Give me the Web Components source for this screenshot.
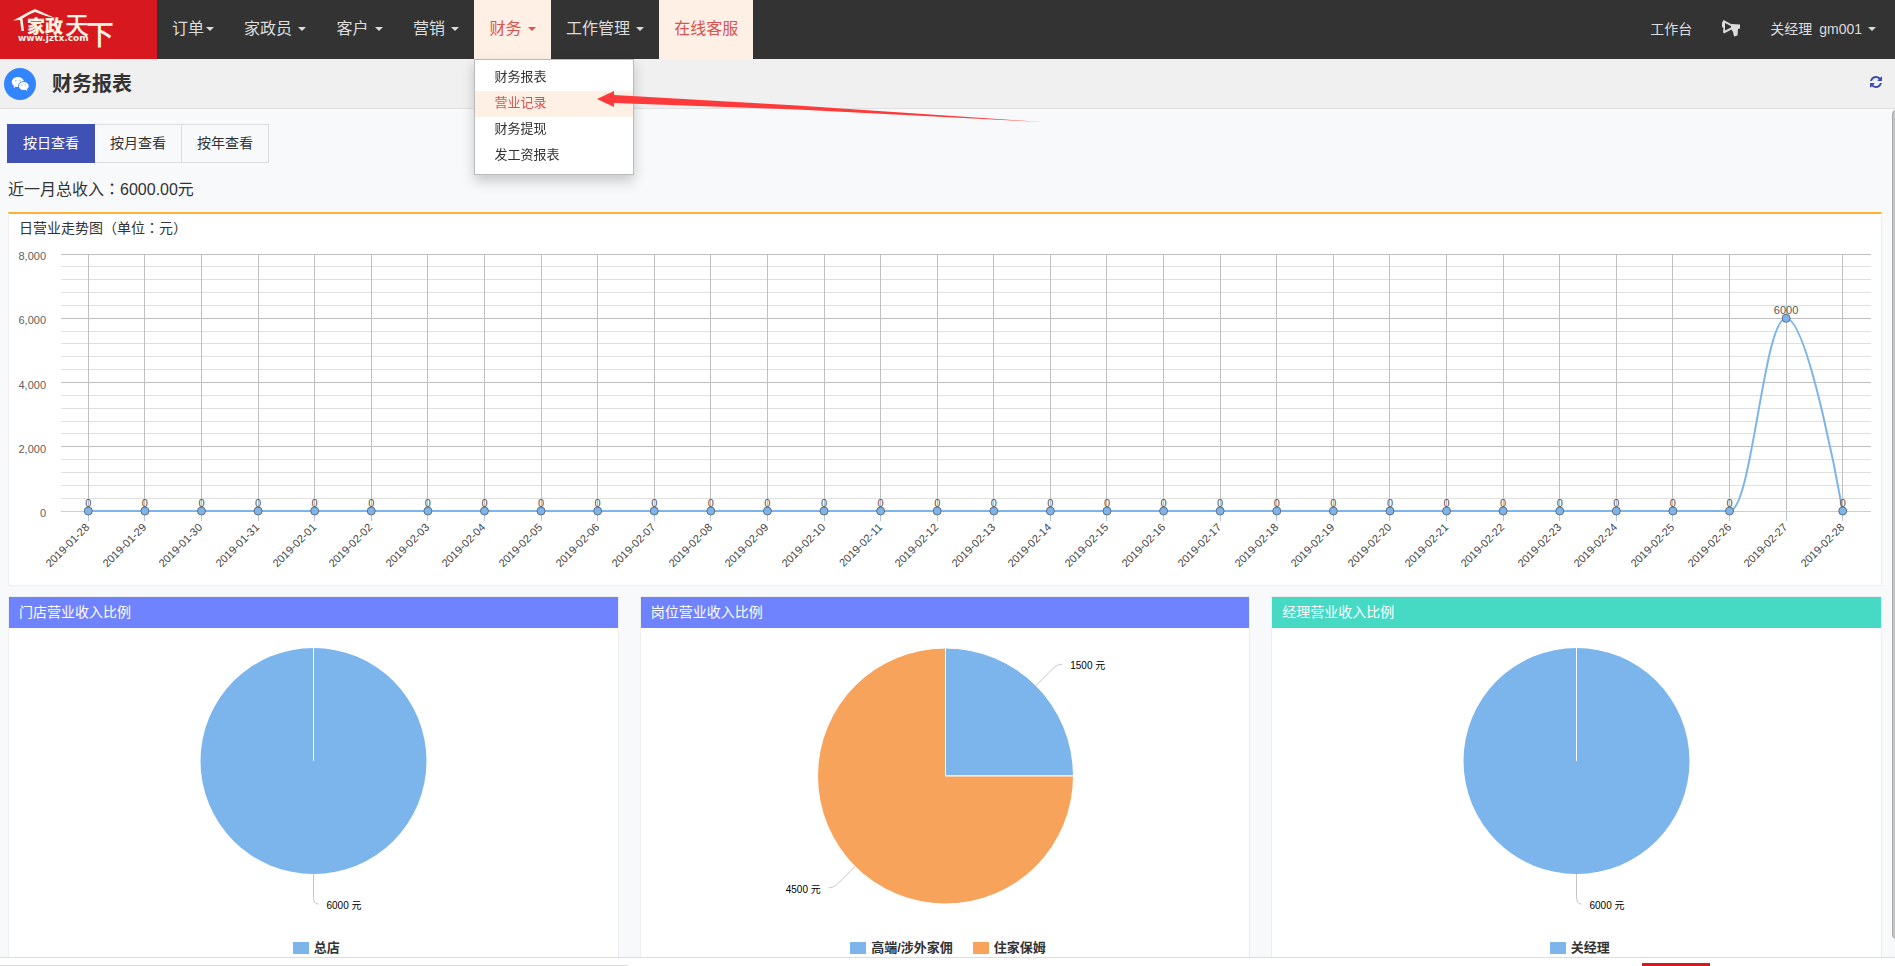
<!DOCTYPE html>
<html lang="zh-CN">
<head>
<meta charset="utf-8">
<title>财务报表</title>
<style>
  html, body { margin: 0; height: 100%; }
  body { font: 14px/20px "Liberation Sans", "Noto Sans CJK SC", sans-serif; color: #333; background: #fff; }
</style>
</head>
<body>
<finance-app></finance-app>

<script>
const define = (name, html, setup) => {
  const tpl = document.createElement('template');
  tpl.innerHTML = html;
  customElements.define(name, class extends HTMLElement {
    connectedCallback() {
      if (this.shadowRoot) return;
      this.attachShadow({ mode: 'open' }).append(tpl.content.cloneNode(true));
      if (setup) setup(this, this.shadowRoot);
    }
  });
};

/* Brand logo */
define('brand-logo', `
<style>
  :host { display: block; flex: 0 0 157px; background: #d7191f; }
  a { display: block; height: 100%; }
  svg { display: block; }
</style>
<a href="#" aria-label="家政天下">
  <svg width="157" height="59" fill="#fff3e4">
    <path d="M13 20.500 C20 17 28 12 35 9 C42 12 48 15 55 18 C48 17 41 14 35 12 C29 14 25 17 22.500 18.500 L24 31 L21.500 31 L20 20 Z"/>
    <text x="27" y="33" font-size="18" font-weight="900" font-family="Noto Sans CJK SC, sans-serif">家政</text>
    <text x="65" y="34" font-size="24" font-weight="500" font-family="Noto Sans CJK SC, sans-serif">天</text>
    <text x="86" y="45" font-size="28" font-weight="500" font-family="Noto Sans CJK SC, sans-serif">下</text>
    <text x="18" y="41" font-size="9" font-weight="bold" font-family="DejaVu Sans, sans-serif">www.jztx.com</text>
  </svg>
</a>`);

/* Navigation entry: text, optional caret, optional menu in the "menu" slot */
define('nav-item', `
<style>
  :host { display: block; position: relative; }
  a { display: flex; align-items: center; height: 59px; box-sizing: border-box; padding: 0 15px 2px;
      font-size: var(--nav-size, 16px); color: #ddd; text-decoration: none; white-space: nowrap; }
  :host([active]) a { background: #fff0e6; color: #d9534f; }
  i, .space { display: none; }
  i { margin-left: 2px; border: 4px solid transparent; border-top-color: currentColor; border-bottom: 0; }
  :host([caret]) i, :host([caret]) .space { display: block; }
  :host([tight]) .space { display: none; }
</style>
<a href="#"><slot></slot><span class="space">&nbsp;</span><i></i></a><slot name="menu"></slot>`);

define('nav-menu', `
<style>
  :host { display: block; position: absolute; z-index: 5; left: 0; top: 100%; width: 160px; box-sizing: border-box;
          padding: 5px 0; background: #fff; border: 1px solid #bbb; box-shadow: 0 6px 12px rgba(0,0,0,.2); }
  ::slotted(a) { display: block; padding: 0 19px 2px; font-size: 13px; line-height: 24px; color: #333; text-decoration: none; }
  ::slotted(a[aria-current]) { background: #fff0e6; color: #d9534f; }
</style>
<slot></slot>`);

/* Red callout arrow lying over the menu */
define('callout-arrow', `
<style>
  :host { display: block; position: absolute; z-index: 6; left: 123px; top: 91px; pointer-events: none; }
  svg { display: block; }
</style>
<svg width="446" height="32" fill="#ff3a3a"><path d="M0 8 L17 0 L17 4 L200 14.500 L445 31 L200 18.500 L17 12 L17 16 Z"/></svg>`);

define('site-header', `
<style>
  :host { display: flex; height: 59px; background: #333; }
  nav { display: flex; }
  .user { margin-left: auto; padding-right: 4px; --nav-size: 14px; }
  svg { display: block; }
  .id { margin-left: 7px; }
</style>
<brand-logo></brand-logo>
<nav>
  <nav-item caret tight>订单</nav-item>
  <nav-item caret>家政员</nav-item>
  <nav-item caret>客户</nav-item>
  <nav-item caret>营销</nav-item>
  <nav-item caret active>财务
    <nav-menu slot="menu">
      <a href="#">财务报表</a>
      <a href="#" aria-current="page">营业记录</a>
      <a href="#">财务提现</a>
      <a href="#">发工资报表</a>
    </nav-menu>
    <callout-arrow slot="menu"></callout-arrow>
  </nav-item>
  <nav-item caret>工作管理</nav-item>
  <nav-item active>在线客服</nav-item>
</nav>
<nav class="user">
  <nav-item>工作台</nav-item>
  <nav-item>
    <svg width="18" height="20" fill="#ddd" role="img" aria-label="公告">
      <path fill-rule="evenodd" d="M0 4 L1.500 1 L9 5 L18 5.500 L18 9.500 L16 10 L15.500 16.500 L12 17.500 L11 13 L9.500 10.500 L2 14.500 L1 13 L1.500 9 L0 8 Z M3 4 L3 11.500 L9 8.500 L9 7 Z"/>
    </svg>
  </nav-item>
  <nav-item caret>关经理<span class="id">gm001</span></nav-item>
</nav>`);

define('page-bar', `
<style>
  :host { display: flex; align-items: center; height: 49px; padding: 0 13px 0 4px; background: #f0f0f0; border-bottom: 1px solid #e0e0e0; }
  .badge { display: block; }
  h1 { margin: 0 auto 0 16px; font-size: 20px; line-height: 28px; font-weight: bold; }
  button { display: block; padding: 0 0 3px; border: 0; background: none; }
  button svg { display: block; }
</style>
<svg class="badge" width="32" height="32" aria-hidden="true">
  <circle cx="16" cy="16" r="16" fill="#3385ff"/>
  <path fill="#fff" d="M14 9 C10.500 9 7.800 11.200 7.800 14.100 C7.800 15.800 8.700 17.100 10.100 18.100 L9.600 20 L11.900 18.800 Q13 19.200 14.200 19.100 C13.600 15.800 16.300 13.200 19.900 13.300 C19.300 10.800 17 9 14 9 Z"/>
  <path fill="#fff" d="M19.600 13.900 C16.900 13.900 14.800 15.700 14.800 18 C14.800 20.300 16.900 22.100 19.600 22.100 Q20.600 22.100 21.500 21.800 L23.300 22.900 L22.900 21.100 C24 20.300 24.700 19.200 24.700 18 C24.700 15.700 22.400 13.900 19.600 13.900 Z"/>
  <g fill="#3385ff"><circle cx="11.900" cy="12.800" r=".6"/><circle cx="16" cy="12.800" r=".6"/><circle cx="18" cy="17" r=".5"/><circle cx="21.400" cy="17" r=".5"/></g>
</svg>
<h1>财务报表</h1>
<button aria-label="刷新">
  <svg width="12" height="12" viewBox="0 0 1536 1536" fill="#3f4bb0"><path d="M1511 928q0 5-1 7-64 268-268 434.500T764 1536q-146 0-282.500-55T238 1324l-129 129q-19 19-45 19t-45-19-19-45V960q0-26 19-45t45-19h448q26 0 45 19t19 45-19 45l-137 137q71 66 161 102t187 36q134 0 250-65t186-179q11-17 53-117 8-23 30-23h192q13 0 22.500 9.500t9.500 22.500zm25-800v448q0 26-19 45t-45 19h-448q-26 0-45-19t-19-45 19-45l138-138Q969 256 768 256q-134 0-250 65T332 500q-11 17-53 117-8 23-30 23H50q-13 0-22.500-9.500T18 608v-7q65-268 270-434.500T768 0q146 0 284 55.500T1297 212l130-129q19-19 45-19t45 19 19 45z"/></svg>
</button>`);

define('period-tabs', `
<style>
  :host { display: flex; }
  ::slotted(button) { height: 39px; margin: 0; padding: 0 15px 2px; border: 1px solid #ddd; border-left-width: 0;
    background: #f7f9fb; color: #333; font: inherit; }
  ::slotted(button[aria-pressed="true"]) { background: #3f51b5; border-color: #3f51b5; border-left-width: 1px; color: #fff; }
</style>
<slot></slot>`);

/* Spline chart of daily turnover, redrawn to the width of its host */
define('trend-chart', `
<style>
  :host { display: block; background: #fff; border: 1px solid #eee; border-top: 2px solid #ffb032; padding-bottom: 16px; }
  h2 { margin: 0; padding: 4px 10px 6px; font-size: 14px; line-height: 20px; font-weight: normal; }
  svg { display: block; width: 100%; height: 325px; overflow: visible; font-size: 11px; }
</style>
<h2><slot></slot></h2>
<svg role="img" aria-label="日营业走势图"></svg>`, (host, root) => {
  const svg = root.querySelector('svg');
  const days = [];
  for (let t = Date.UTC(2019, 0, 28); t <= Date.UTC(2019, 1, 28); t += 864e5) days.push(new Date(t).toISOString().slice(0, 10));
  const values = days.map(d => d === '2019-02-27' ? 6000 : 0);
  const draw = () => {
    const w = svg.clientWidth, left = 51, right = w - 10, top = 10, base = 267;
    const step = (right - left) / days.length;
    const X = i => left + step * (i + .5), Y = v => base - v / 8000 * (base - top);
    const snap = n => Math.floor(n) + .5;
    let s = '';
    for (let k = 1; k <= 20; k++) {
      const y = snap(Y(k * 400));
      s += `<path d="M${left + 1} ${y}H${right}" stroke="${k % 5 ? '#e0e0e0' : '#c0c0c0'}"/>`;
    }
    days.forEach((d, i) => {
      const x = snap(X(i));
      s += `<path d="M${x} ${top}V${base}" stroke="#c0c0c0"/><path d="M${x} ${base}v10" stroke="#b8c8e0"/>`;
    });
    s += `<path d="M${left + 1} ${base + .5}H${right}" stroke="#c0d0e0"/>`;
    for (let v = 0; v <= 8000; v += 2000)
      s += `<text x="${left - 14}" y="${Math.round(Y(v)) + 6}" text-anchor="end" fill="#606060">${v.toLocaleString('en-US')}</text>`;
    days.forEach((d, i) => {
      s += `<text transform="translate(${Math.round(X(i)) + 2} ${base + 17}) rotate(-45)" text-anchor="end" fill="#444">${d}</text>`;
    });
    let p = `M${X(0)} ${Y(values[0])}`;
    for (let i = 1; i < values.length; i++) {
      const c = step * .4, end = i === values.length - 1 ? 0 : c;
      p += `C${X(i - 1) + c} ${Y(values[i - 1])} ${X(i) - end} ${Y(values[i])} ${X(i)} ${Y(values[i])}`;
    }
    s += `<path d="${p}" fill="none" stroke="#7cb5ec" stroke-width="2"/>`;
    values.forEach((v, i) => {
      s += `<circle cx="${X(i)}" cy="${Y(v)}" r="4" fill="#7cb5ec" stroke="#666e78"/>`;
      s += `<text x="${X(i)}" y="${Math.round(Y(v)) - 4}" text-anchor="middle" fill="#555">${v}</text>`;
    });
    svg.innerHTML = s;
  };
  draw();
  new ResizeObserver(draw).observe(host);
});

/* Pie with outside labels and a legend; slices come as "name:value:colour" */
define('pie-card', `
<style>
  :host { display: block; background: #fff; border: 1px solid #eee; padding-bottom: 12px; }
  h2 { margin: 0; padding: 5px 10px 6px; background: var(--head, #6f83ff); color: #fff; font-size: 14px; line-height: 20px; font-weight: normal; }
  svg { display: block; width: 100%; height: 308px; overflow: visible; font-size: 10px; }
  ul { display: flex; justify-content: center; gap: 20px; margin: 0; padding: 0 0 0 6px; list-style: none; }
  li { display: flex; align-items: center; gap: 5px; font-size: 13px; line-height: 24px; font-weight: bold; }
  b { width: 16px; height: 12px; }
</style>
<h2><slot></slot></h2>
<svg role="img"></svg>
<ul></ul>`, (host, root) => {
  const svg = root.querySelector('svg'), r = +host.getAttribute('radius');
  svg.setAttribute('aria-label', host.textContent);
  const slices = host.getAttribute('slices').split(',').map(t => t.split(':'));
  const total = slices.reduce((a, t) => a + +t[1], 0);
  root.querySelector('ul').innerHTML = slices.map(t => `<li><b style="background:${t[2]}"></b>${t[0]}</li>`).join('');
  const draw = () => {
    const cx = Math.floor(svg.clientWidth / 2) + .5, cy = 20 + r;
    const at = (a, d) => [Math.sin(a) * d, -Math.cos(a) * d];
    let a = 0, s = '';
    slices.forEach(t => {
      const share = t[1] / total, b = a + share * 2 * Math.PI, m = (a + b) / 2;
      const [x1, y1] = at(a, r), [x2, y2] = at(b, r);
      s += share === 1
        ? `<circle r="${r}" fill="${t[2]}"/><path d="M0 0V${-r}" stroke="#fff"/>`
        : `<path d="M0 0L${x1} ${y1}A${r} ${r} 0 ${share > .5 ? 1 : 0} 1 ${x2} ${y2}Z" fill="${t[2]}" stroke="#fff"/>`;
      const side = Math.sin(m) < -.01 ? -1 : 1;
      const [p, q] = at(m, r), [u, v] = at(m, r + 18), [g, h] = at(m, r + 26), [e, f] = at(m, r + 30);
      s += `<path d="M${p} ${q}L${u} ${v}C${g} ${h} ${e} ${f} ${e + side * 5} ${f}" fill="none" stroke="#c4c4c4"/>`;
      s += `<text x="${e + side * 13}" y="${f + 5}" text-anchor="${side < 0 ? 'end' : 'start'}" fill="#000">${t[1]} 元</text>`;
      a = b;
    });
    svg.innerHTML = `<g transform="translate(${cx} ${cy})">${s}</g>`;
  };
  draw();
  new ResizeObserver(draw).observe(host);
});

define('report-view', `
<style>
  :host { display: block; box-sizing: border-box; padding: 15px 13px 20px 8px; background: #f7f9fb; overflow: auto; scrollbar-width: none; min-height: 0; }
  period-tabs { margin-left: -1px; }
  p { margin: 15px 0 10px; font-size: 16px; line-height: 24px; }
  span:lang(zh-TW) { font-family: "Liberation Sans", "Noto Sans CJK TC", sans-serif; }
  .pies { display: grid; grid-template-columns: repeat(3, minmax(0, 1fr)); gap: 21px; margin-top: 10px; }
  .green { --head: #46dac5; }
</style>
<period-tabs>
  <button aria-pressed="true">按日查看</button>
  <button aria-pressed="false">按月查看</button>
  <button aria-pressed="false">按年查看</button>
</period-tabs>
<p>近一月总收入<span lang="zh-TW">：</span>6000.00元</p>
<trend-chart>日营业走势图<span lang="zh-TW">（单位：元）</span></trend-chart>
<div class="pies">
  <pie-card radius="113" slices="总店:6000:#7cb5ec">门店营业收入比例</pie-card>
  <pie-card radius="128" slices="高端/涉外家佣:1500:#7cb5ec,住家保姆:4500:#f7a35c">岗位营业收入比例</pie-card>
  <pie-card class="green" radius="113" slices="关经理:6000:#7cb5ec">经理营业收入比例</pie-card>
</div>`);

define('status-strip', `
<style>
  :host { display: flex; align-items: flex-end; height: 8px; background: #fff; border-top: 1px solid #ddd; }
  .rule { flex: 0 0 628px; height: 1px; background: #ddd; }
  .tag { flex: 0 0 68px; height: 3px; margin: 0 185px 0 auto; background: #d7191f; }
</style>
<div class="rule"></div><div class="tag"></div>`);

define('finance-app', `
<style>
  :host { display: grid; grid-template-rows: auto auto minmax(0, 1fr) auto; height: 100vh; position: relative; overflow: hidden; }
  site-header { position: relative; z-index: 2; }
  .body { display: grid; position: relative; min-height: 0; overflow: hidden; }
  .thumb { position: absolute; right: -5px; top: 1px; bottom: 18px; width: 8px; box-sizing: border-box; background: #c4c4c4; border: 1px solid #aaa; border-radius: 4px; }
</style>
<site-header></site-header>
<page-bar></page-bar>
<div class="body"><report-view></report-view><div class="thumb"></div></div>
<status-strip></status-strip>`);
</script>
</body>
</html>
